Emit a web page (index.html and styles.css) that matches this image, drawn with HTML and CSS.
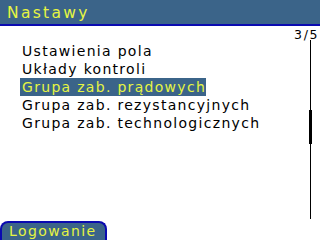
FILE: index.html
```html
<!DOCTYPE html>
<html>
<head>
<meta charset="utf-8">
<link rel="stylesheet" href="styles.css">
</head>
<body>
<div class="screen">
  <header class="title">Nastawy</header>
  <main class="content">
    <div class="pager">3/5</div>
    <div class="body">
      <ul class="menu">
        <li>Ustawienia pola</li>
        <li>Układy kontroli</li>
        <li class="sel">Grupa zab. prądowych</li>
        <li>Grupa zab. rezystancyjnych</li>
        <li>Grupa zab. technologicznych</li>
      </ul>
      <div class="scroll"><div class="thumb"></div></div>
    </div>
  </main>
  <footer class="foot"><span class="btn">Logowanie</span></footer>
</div>
</body>
</html>
```
FILE: styles.css
```css
html, body { margin: 0; padding: 0; background: #fff; }
.screen {
  width: 320px; height: 240px; display: flex; flex-direction: column;
  font-family: "DejaVu Sans", sans-serif; overflow: hidden;
}
.title {
  height: 24px; background: #3b6489; border-bottom: 2px solid #0a0ab0;
  color: #e6f542; font-size: 15.5px; line-height: 26px; padding-left: 7px;
  letter-spacing: 2.3px; flex: none;
}
.content { flex: 1; display: flex; flex-direction: column; }
.pager {
  height: 16px; text-align: right; font-size: 12.5px; line-height: 17px;
  letter-spacing: 1.6px; padding-right: 1px; color: #000; flex: none;
}
.body { display: flex; flex: 1; }
.menu { list-style: none; margin: 0; padding: 0 0 0 20px; flex: 1; }
.menu li {
  font-size: 14px; line-height: 18px; height: 18px; padding-left: 2px;
  letter-spacing: 1.3px; color: #000; white-space: nowrap;
}
.menu li.sel { background: #3b6489; color: #e6f542; width: 186px; box-sizing: border-box; }
.scroll { width: 1px; background: #000; margin: -2px 9px 2px 0; position: relative; flex: none; }
.thumb { position: absolute; left: -1px; width: 3px; top: 70px; height: 34px; background: #000; }
.foot { height: 19px; display: flex; flex: none; }
.btn {
  background: #3b6489; color: #e6f542; border: 2px solid #0a0ab0; border-bottom: none;
  border-radius: 8px 8px 0 0; font-size: 14px; line-height: 17px;
  padding: 0 8px 0 7px; letter-spacing: 1.4px;
}
```
